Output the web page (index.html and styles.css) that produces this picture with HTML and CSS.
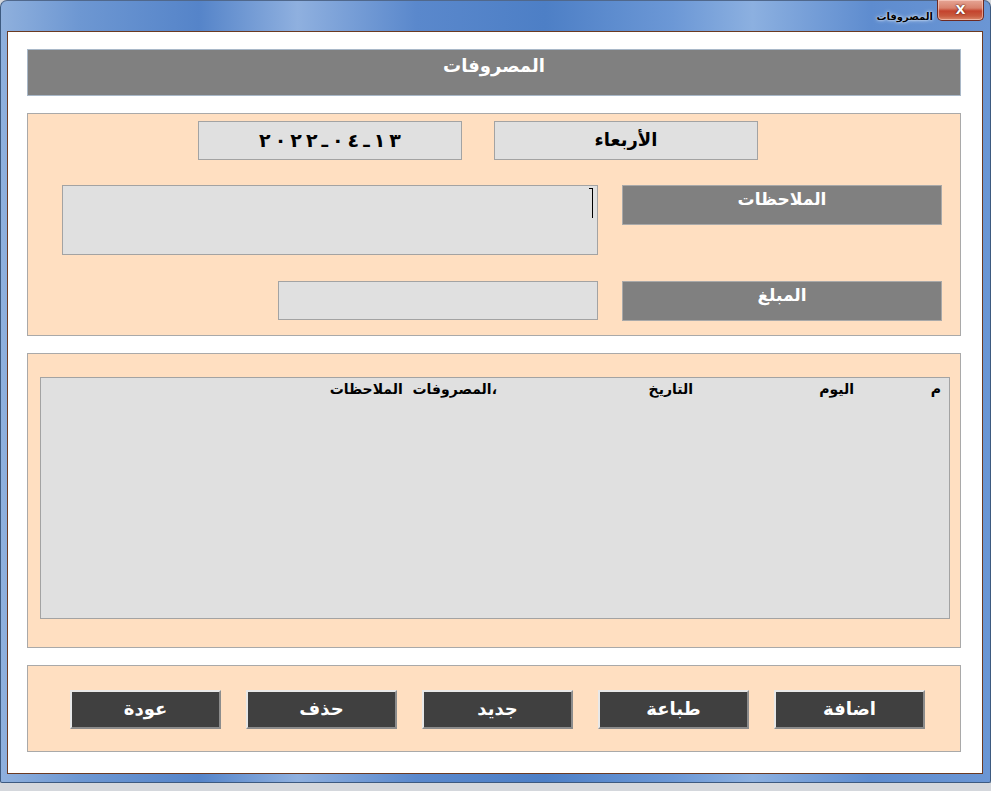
FILE: index.html
```html
<!DOCTYPE html>
<html lang="ar">
<head>
<meta charset="utf-8">
<title>المصروفات</title>
<link rel="stylesheet" href="styles.css">
</head>
<body>
<div class="window">
  <div class="titlebar">
    <span class="title">المصروفات</span>
    <div class="close">X</div>
  </div>
  <div class="client" dir="rtl">
    <div class="header">المصروفات</div>

    <section class="panel p1">
      <div class="row r1">
        <div class="field box">الأربعاء</div>
        <div class="field box"><span class="date"><span>٢</span><span>٠</span><span>٢</span><span>٢</span><span>ـ</span><span>٠</span><span>٤</span><span>ـ</span><span>١</span><span>٣</span></span></div>
      </div>
      <div class="row r2">
        <div class="label">الملاحظات</div>
        <div class="field notes"><span class="caret"></span></div>
      </div>
      <div class="row r3">
        <div class="label">المبلغ</div>
        <div class="field amount"></div>
      </div>
    </section>

    <section class="panel p2">
      <div class="list">
        <div class="cols">
          <span class="c1">م</span>
          <span class="c2">اليوم</span>
          <span class="c3">التاريخ</span>
          <span class="c4">،المصروفات&nbsp; الملاحظات</span>
        </div>
      </div>
    </section>

    <section class="panel p3">
      <button class="btn">اضافة</button>
      <button class="btn">طباعة</button>
      <button class="btn">جديد</button>
      <button class="btn">حذف</button>
      <button class="btn">عودة</button>
    </section>
  </div>
</div>
</body>
</html>
```

FILE: styles.css
```css
* { box-sizing: border-box; }

html, body {
  margin: 0;
  padding: 0;
}

body {
  width: 991px;
  height: 791px;
  background: #d4d7dc;
  font-family: "Liberation Sans", "DejaVu Sans", sans-serif;
  overflow: hidden;
}

.window {
  width: 991px;
  height: 783px;
  padding: 0 7px 8px 6px;
  border: 1px solid #3d5a80;
  border-top-color: #50688c;
  border-radius: 7px 7px 2px 2px;
  background:
    linear-gradient(to right, #8fb0dd 0%, #6d97d2 8%, #5584c9 20%, #8fb0df 30%, #5a88cc 42%, #4d7fc6 55%, #6c98d6 68%, #8cb0e0 76%, #5e8ccf 88%, #6b96d4 100%);
  display: flex;
  flex-direction: column;
}

.titlebar {
  height: 30px;
  display: flex;
  justify-content: flex-end;
  align-items: flex-start;
  flex: none;
}

.title {
  font-family: "DejaVu Sans", sans-serif;
  font-size: 10px;
  font-weight: bold;
  color: #000;
  margin-top: 10px;
  margin-right: 4px;
  text-shadow: 0 0 4px #dbe7f6, 0 0 2px #e9f1fb;
}

.close {
  width: 47px;
  height: 21px;
  margin-top: -1px;
  margin-right: -1px;
  border: 1px solid #6e2a22;
  border-top: none;
  border-radius: 0 0 5px 5px;
  background: linear-gradient(to bottom, #e6a595 0%, #d8826d 40%, #c4432d 55%, #c85a3f 80%, #dc8a6c 100%);
  box-shadow: inset 0 0 0 1px rgba(255, 220, 210, 0.55);
  color: #fff;
  font-family: "DejaVu Sans", sans-serif;
  font-weight: bold;
  font-size: 13px;
  line-height: 20px;
  text-align: center;
  text-shadow: 0 0 2px #5a1a10, 0 0 1px #5a1a10;
}

.client {
  flex: 1;
  background: #fff;
  border: 1px solid #6b3a22;
  padding: 17px 21px 0 19px;
  display: flex;
  flex-direction: column;
  gap: 17px;
  font-family: "DejaVu Sans", sans-serif;
}

.header {
  height: 47px;
  background: #808080;
  border: 1px solid #a9b8c8;
  color: #fff;
  font-weight: bold;
  font-size: 18px;
  text-align: center;
  padding-top: 5px;
}

.panel {
  background: #ffdfc1;
  border: 1px solid #a9a9a9;
}

.p1 {
  height: 223px;
  padding: 7px 18px 0 0;
}

.row {
  display: flex;
}

.r1 {
  gap: 32px;
  padding-right: 184px;
}

.r2 {
  margin-top: 25px;
  gap: 24px;
  align-items: flex-start;
}

.r3 {
  margin-top: 26px;
  gap: 24px;
  align-items: flex-start;
}

.field {
  background: #e0e0e0;
  border: 1px solid #a3a3a3;
}

.box {
  width: 264px;
  height: 39px;
  font-weight: bold;
  font-size: 18px;
  line-height: 36px;
  text-align: center;
  color: #000;
}

.date {
  display: inline-flex;
  direction: ltr;
  gap: 4px;
  font-size: 19px;
}

.label {
  width: 320px;
  height: 40px;
  background: #808080;
  border: 1px solid #a9a9a9;
  color: #fff;
  font-weight: bold;
  font-size: 17px;
  text-align: center;
  padding-top: 3px;
}

.notes {
  width: 536px;
  height: 70px;
  position: relative;
}

.caret {
  position: absolute;
  right: 4px;
  top: 2px;
  width: 1px;
  height: 30px;
  background: #000;
}

.caret::before {
  content: "";
  position: absolute;
  left: -3px;
  top: 0;
  width: 3px;
  height: 1px;
  background: #000;
}

.amount {
  width: 320px;
  height: 39px;
}

.p2 {
  height: 295px;
  padding: 23px 10px 28px 12px;
}

.list {
  height: 100%;
  background: #e0e0e0;
  border: 1px solid #a3a3a3;
}

.cols {
  display: flex;
  padding: 3px 8px 0 0;
  font-family: "DejaVu Sans", sans-serif;
  font-weight: bold;
  font-size: 14px;
  color: #000;
}

.c1 { width: 87px; }
.c2 { width: 161px; }
.c3 { width: 196px; }

.p3 {
  height: 87px;
  display: flex;
  gap: 25px;
  padding: 24px 35px 0 0;
}

.btn {
  width: 151px;
  height: 39px;
  background: #404040;
  border: 2px solid;
  border-color: #e8e8e8 #8c8c8c #8c8c8c #e8e8e8;
  color: #fff;
  font-family: "DejaVu Sans", sans-serif;
  font-weight: bold;
  font-size: 18px;
  padding: 0 0 2px;
  cursor: pointer;
}
```
